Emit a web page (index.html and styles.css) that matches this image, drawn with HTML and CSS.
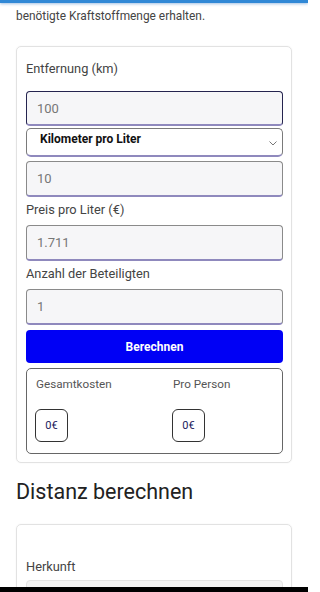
FILE: index.html
```html
<!DOCTYPE html>
<html lang="de">
<head>
<meta charset="utf-8">
<meta name="viewport" content="width=308">
<link rel="stylesheet" href="styles.css">
</head>
<body>
<div class="page">
<div class="topbar"></div>
<p class="intro">benötigte Kraftstoffmenge erhalten.</p>
<div class="card">
  <div class="label first">Entfernung (km)</div>
  <div class="field focused">100</div>
  <div class="select">
    <span>Kilometer pro Liter</span>
    <svg class="chev" width="8" height="5" viewBox="0 0 8 5"><path d="M0.5 0.5 L4 4 L7.5 0.5" fill="none" stroke="#777" stroke-width="1"/></svg>
  </div>
  <div class="field gap4">10</div>
  <div class="label">Preis pro Liter (€)</div>
  <div class="field">1.711</div>
  <div class="label">Anzahl der Beteiligten</div>
  <div class="field">1</div>
  <div class="button">Berechnen</div>
  <div class="result">
    <div class="col">
      <div class="rlabel">Gesamtkosten</div>
      <div class="value">0€</div>
    </div>
    <div class="col">
      <div class="rlabel">Pro Person</div>
      <div class="value">0€</div>
    </div>
  </div>
</div>
<h2 class="heading">Distanz berechnen</h2>
<div class="card card2">
  <div class="label">Herkunft</div>
  <div class="field plain"></div>
</div>
<div class="bottombar"></div>
</div>
</body>
</html>
```
FILE: styles.css
```css
html, body {
  margin: 0;
  padding: 0;
  background: #fff;
  font-family: Roboto, "Noto Sans", "Liberation Sans", sans-serif;
  overflow: hidden;
  height: 592px;
}
.page {
  width: 308px;
  height: 592px;
  overflow: hidden;
  position: relative;
}
.topbar {
  height: 3px;
  background: #3088d6;
  box-shadow: 0 1px 3px rgba(40, 110, 190, 0.45);
}
.intro {
  margin: 5px 0 0 16px;
  font-size: 11.9px;
  line-height: 16px;
  color: #444;
}
.card {
  margin: 22px 16px 0 16px;
  border: 1px solid #e2e2e2;
  border-radius: 5px;
  padding: 12px 8px 8px 9px;
  box-shadow: 0 0 2px rgba(0, 0, 0, 0.06);
}
.label {
  font-size: 12.8px;
  line-height: 20px;
  color: #444;
  margin-top: 3px;
  margin-bottom: 5px;
}
.label.first {
  margin-top: 0;
  margin-bottom: 12px;
}
.field {
  box-sizing: border-box;
  height: 36px;
  border: 1px solid #8a8a8a;
  border-bottom: 2px solid #8f89bd;
  border-radius: 4px;
  background: #f6f6f8;
  padding-left: 10px;
  display: flex;
  align-items: center;
  font-size: 13px;
  color: #777;
}
.field.focused {
  height: 35px;
  border-color: #25244f;
  border-bottom-color: #8f89bd;
}
.field.gap4 {
  margin-top: 4px;
}
.select {
  box-sizing: border-box;
  margin-top: 2px;
  height: 29px;
  border: 1px solid #7a7a7a;
  border-bottom: 2px solid #8f89bd;
  border-radius: 5px;
  background: #fff;
  padding: 0 4px 0 13px;
  display: flex;
  align-items: center;
  justify-content: space-between;
  font-size: 12px;
  font-weight: 700;
  color: #111;
}
.select span {
  position: relative;
  top: -3px;
}
.chev {
  margin-right: 1px;
  position: relative;
  top: 1px;
}
.button {
  margin-top: 5px;
  height: 33px;
  border-radius: 4px;
  background: #0000f5;
  color: #fff;
  font-size: 12px;
  font-weight: 700;
  display: flex;
  align-items: center;
  justify-content: center;
}
.result {
  box-sizing: border-box;
  margin-top: 5px;
  height: 86px;
  border: 1px solid #666;
  border-radius: 5px;
  padding: 6px 0 0 9px;
  display: grid;
  grid-template-columns: 137px 1fr;
}
.rlabel {
  font-size: 11.7px;
  line-height: 18px;
  color: #555;
}
.value {
  box-sizing: border-box;
  margin-top: 16px;
  margin-left: -1px;
  width: 33px;
  height: 33px;
  border: 1px solid #333;
  border-radius: 6px;
  display: flex;
  align-items: center;
  justify-content: center;
  font-size: 11px;
  color: #1b1b5c;
}
.heading {
  margin: 15px 0 0 16px;
  font-size: 21.5px;
  line-height: 28px;
  font-weight: 400;
  color: #222;
}
.card2 {
  margin-top: 18px;
  padding-top: 32px;
  height: 200px;
}
.card2 .label {
  margin-top: 0;
  margin-bottom: 3px;
}
.field.plain {
  background: #f4f4f4;
  border: 1px solid #e4e4e4;
}
.bottombar {
  position: absolute;
  left: 0;
  right: 0;
  top: 587px;
  height: 5px;
  background: #000;
}
```
